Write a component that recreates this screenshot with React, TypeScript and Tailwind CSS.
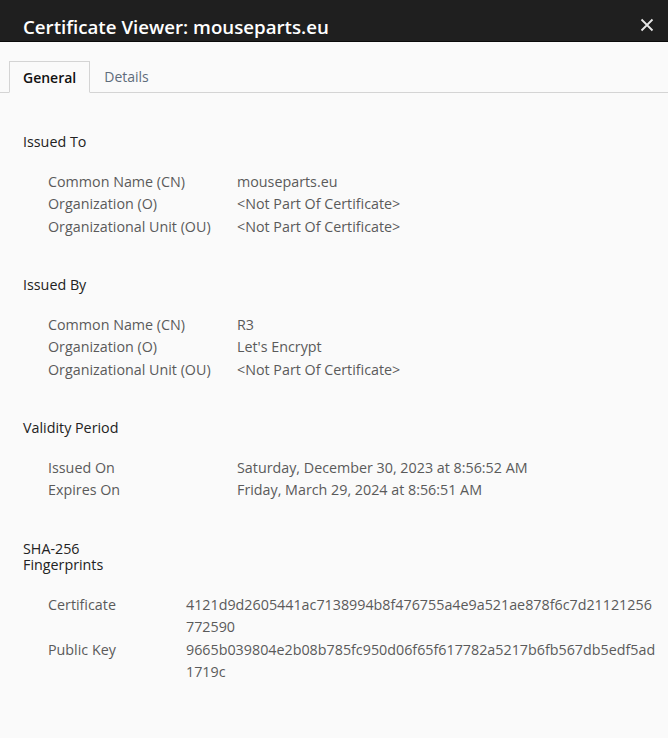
import React from "react";

const font = { fontFamily: '"Open Sans", "Noto Sans", sans-serif' };

function Row({ label, value, valueCol = "w-[189px]" }: { label: string; value: React.ReactNode; valueCol?: string }) {
  return (
    <div className="flex leading-[22.5px]">
      <div className={`${valueCol} shrink-0`}>{label}</div>
      <div>{value}</div>
    </div>
  );
}

function Section({ title, children }: { title: React.ReactNode; children: React.ReactNode }) {
  return (
    <div>
      <div className="text-[#222] leading-[16.5px]">{title}</div>
      <div className="mt-[20px] pl-[25px] text-[#5a5a5a]">{children}</div>
    </div>
  );
}

export default function App() {
  return (
    <div className="w-[668px] h-[738px] bg-[#fafafa] overflow-hidden text-[14.3px]" style={font}>
      <div className="h-[42px] bg-[#1f1f1f] border-b border-[#0a0a0a] flex items-end justify-between pl-[23px] pr-[14px]">
        <div className="text-white text-[18.7px] font-semibold leading-none pb-[4px]">Certificate Viewer: mouseparts.eu</div>
        <svg width="14" height="14" viewBox="0 0 14 14" className="mb-[9px]">
          <path d="M1.5 1.5 L12.5 12.5 M12.5 1.5 L1.5 12.5" stroke="#e8e8e8" strokeWidth="1.8" />
        </svg>
      </div>
      <div className="mt-[19px] flex items-end border-b border-[#d4d4d4] pl-[9px] h-[32px]">
        <div className="h-[32px] -mb-px px-[13px] flex items-center bg-[#fafafa] border border-[#d4d4d4] border-b-[#fafafa] font-semibold text-[#111] text-[14px]">General</div>
        <div className="h-[31px] px-[14px] flex items-center text-[#5f6c7b] text-[14px]">Details</div>
      </div>
      <div className="pl-[23px] pt-[41px] flex flex-col gap-[39px]">
        <Section title="Issued To">
          <Row label="Common Name (CN)" value="mouseparts.eu" />
          <Row label="Organization (O)" value="<Not Part Of Certificate>" />
          <Row label="Organizational Unit (OU)" value="<Not Part Of Certificate>" />
        </Section>
        <Section title="Issued By">
          <Row label="Common Name (CN)" value="R3" />
          <Row label="Organization (O)" value="Let's Encrypt" />
          <Row label="Organizational Unit (OU)" value="<Not Part Of Certificate>" />
        </Section>
        <Section title="Validity Period">
          <Row label="Issued On" value="Saturday, December 30, 2023 at 8:56:52 AM" />
          <Row label="Expires On" value="Friday, March 29, 2024 at 8:56:51 AM" />
        </Section>
        <Section title={<><div>SHA-256</div><div>Fingerprints</div></>}>
          <Row
            label="Certificate"
            valueCol="w-[138px]"
            value={<><div>4121d9d2605441ac7138994b8f476755a4e9a521ae878f6c7d21121256</div><div>772590</div></>}
          />
          <Row
            label="Public Key"
            valueCol="w-[138px]"
            value={<><div>9665b039804e2b08b785fc950d06f65f617782a5217b6fb567db5edf5ad</div><div>1719c</div></>}
          />
        </Section>
      </div>
    </div>
  );
}
